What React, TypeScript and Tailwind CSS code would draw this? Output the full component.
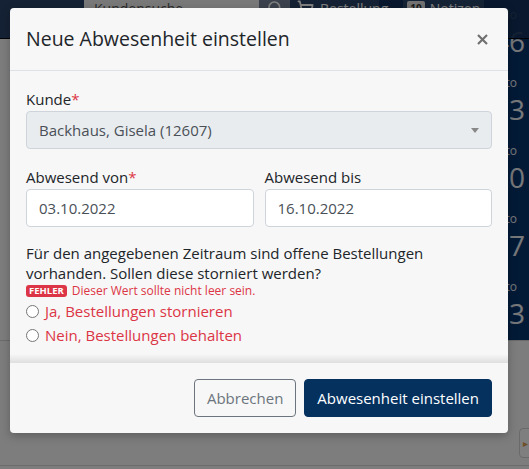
import { Search, ShoppingCart } from 'lucide-react';

const stats = [
  { label: 'Saldo', value: '1.246' },
  { label: 'Umsatz Brutto', value: '1.333' },
  { label: 'Umsatz Netto', value: '120' },
  { label: 'Bestellungen Netto', value: '17' },
  { label: 'Retouren Brutto', value: '3' },
];

function Radio({ label }: { label: string }) {
  return (
    <label className="flex h-[24px] items-center gap-[6px] text-[#dc3545]">
      <span className="h-[13px] w-[13px] shrink-0 rounded-full border border-[#767676] bg-white" />
      {label}
    </label>
  );
}

export default function App() {
  return (
    <div className="relative h-[469px] w-[529px] overflow-hidden bg-[#fbfbfb] font-['Open_Sans','Noto_Sans',sans-serif] text-[#212529]">
      {/* page behind the dialog */}
      <div className="flex h-[341px] border-b border-[#d6d6d6]">
        <main className="flex-1 bg-[#fbfbfb]" />
        <aside className="w-[150px] bg-[#07346f] pt-[7px] text-right text-[#edf0f5]">
          {stats.map((s) => (
            <div key={s.label} className="h-[68px]">
              <div className="pr-[12px] text-[12px] leading-[16px]">{s.label}</div>
              <div className="pr-[4px] text-[28px] leading-[36px]">{s.value}</div>
            </div>
          ))}
        </aside>
      </div>
      <div className="flex h-[125px] justify-end border-b border-[#d6d6d6] pt-[87px]">
        <div className="-mr-[30px] flex h-[30px] w-[40px] items-center rounded-[4px] border border-[#d4d4d4] bg-white pl-[3px] text-[10px] text-[#e0a050]">
          ▸
        </div>
      </div>

      {/* navbar */}
      <header className="absolute inset-x-0 top-0 h-[39px] border-b border-[#02070f] bg-[#14315a]/90">
        <div className="-mt-[7px] ml-[84px] flex h-[30px] items-center">
          <div className="flex h-full w-[175px] items-center bg-[#f2f2f2] px-[10px] text-[14px] text-[#555]">
            Kundensuche
          </div>
          <div className="flex h-full w-[31px] items-center justify-center bg-[#76849a] text-white">
            <Search size={16} strokeWidth={2.5} />
          </div>
          <div className="ml-[7px] flex items-center gap-[6px] text-[14px] text-white">
            <ShoppingCart size={17} strokeWidth={2.5} />
            Bestellung
          </div>
          <div className="ml-[15px] flex h-full items-center gap-[5px] bg-white/10 px-[4px] text-[14px] text-white">
            <span className="rounded-[2px] bg-[#e4e4e4] px-[3px] text-[10px] font-bold leading-[15px] text-[#333]">10</span>
            Notizen
          </div>
        </div>
      </header>

      {/* backdrop */}
      <div className="absolute inset-0 bg-black/50" />

      {/* dialog */}
      <div className="absolute left-[10px] top-[8px] flex w-[498px] flex-col overflow-hidden rounded-[4px] bg-[#f7f7f7] shadow-[0_3px_10px_rgba(0,0,0,0.25)]">
        <div className="flex items-center justify-between border-b border-[#dee2e6] px-4 py-4">
          <h5 className="text-[19.5px] leading-[30px]">Neue Abwesenheit einstellen</h5>
          <button className="mr-[4px] text-[#707070]">
            <svg width="11" height="11" viewBox="0 0 11 11">
              <path d="M1 1 L10 10 M10 1 L1 10" stroke="currentColor" strokeWidth="2.2" />
            </svg>
          </button>
        </div>

        <div className="px-4 pt-4 pb-[7px] text-[15px]">
          <div className="leading-[24px]">
            Kunde<span className="text-[#dc3545]">*</span>
          </div>
          <div className="flex h-[38px] items-center justify-between rounded-[4px] border border-[#ced4da] bg-[#e9ecef] pl-3 pr-[12px] text-[#495057]">
            <span>Backhaus, Gisela (12607)</span>
            <svg width="8" height="5" viewBox="0 0 8 5">
              <path d="M0 0 H8 L4 5 Z" fill="#888" />
            </svg>
          </div>

          <div className="mt-4 grid grid-cols-2 gap-x-[11px]">
            <div>
              <div className="leading-[24px]">
                Abwesend von<span className="text-[#dc3545]">*</span>
              </div>
              <div className="flex h-[38px] items-center rounded-[4px] border border-[#ced4da] bg-white pl-3 text-[#495057]">
                03.10.2022
              </div>
            </div>
            <div>
              <div className="leading-[24px]">Abwesend bis</div>
              <div className="flex h-[38px] items-center rounded-[4px] border border-[#ced4da] bg-white pl-3 text-[#495057]">
                16.10.2022
              </div>
            </div>
          </div>

          <p className="mt-4 leading-[20px]">
            Für den angegebenen Zeitraum sind offene Bestellungen vorhanden. Sollen diese storniert werden?
          </p>
          <div className="flex h-[16px] items-center gap-[5px] text-[12px] text-[#dc3545]">
            <span className="rounded-[3px] bg-[#dc3545] px-[3px] text-[9.5px] font-bold leading-[12px] text-white">
              FEHLER
            </span>
            Dieser Wert sollte nicht leer sein.
          </div>
          <Radio label="Ja, Bestellungen stornieren" />
          <Radio label="Nein, Bestellungen behalten" />
        </div>

        <div className="h-[9px] bg-linear-to-b from-transparent to-black/10" />
        <div className="flex justify-end gap-[8px] p-4 text-[15px]">
          <button className="rounded-[4px] border border-[#6c757d] px-3 py-[6px] leading-[24px] text-[#6c757d]">
            Abbrechen
          </button>
          <button className="rounded-[4px] border border-[#05315f] bg-[#05315f] px-3 py-[6px] leading-[24px] text-white">
            Abwesenheit einstellen
          </button>
        </div>
      </div>
    </div>
  );
}
